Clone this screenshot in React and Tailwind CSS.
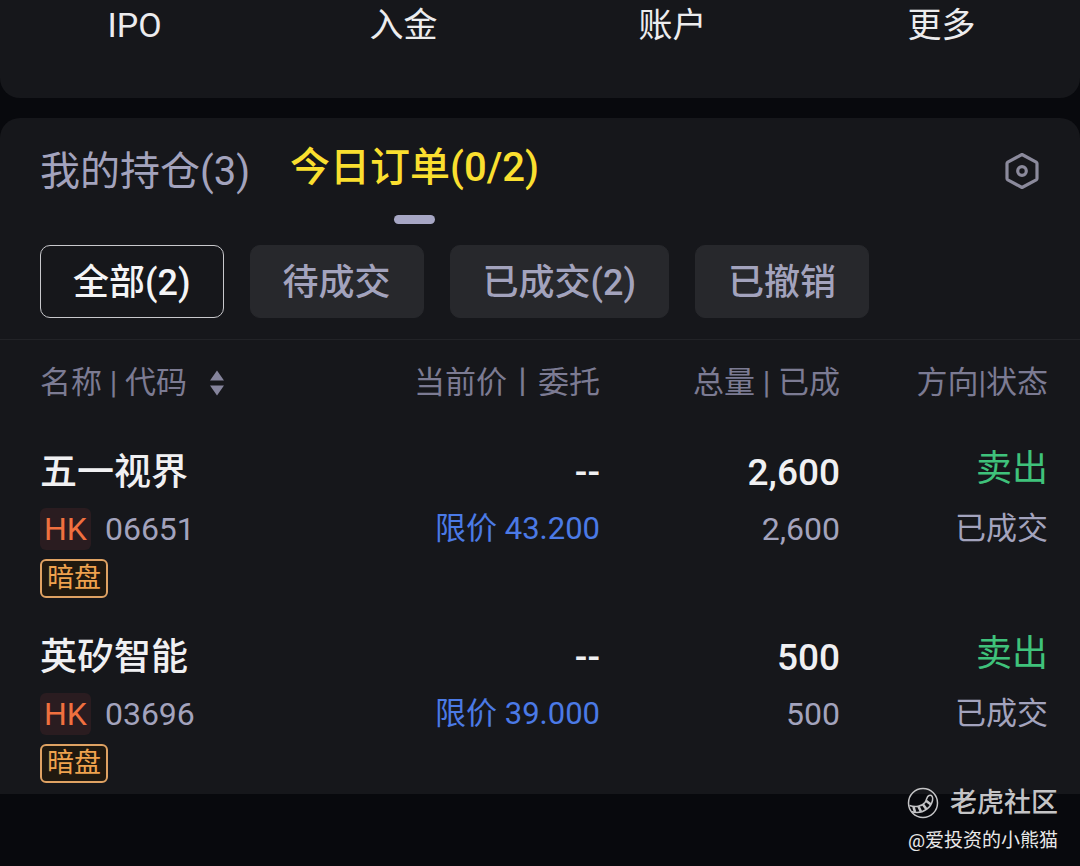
import React from 'react';

const actions = ['IPO', '入金', '账户', '更多'];

const filters = [
  { label: '全部(2)', active: true },
  { label: '待成交' },
  { label: '已成交(2)' },
  { label: '已撤销' },
];

const orders = [
  { name: '五一视界', market: 'HK', code: '06651', price: '--', limit: '限价 43.200', total: '2,600', filled: '2,600' },
  { name: '英矽智能', market: 'HK', code: '03696', price: '--', limit: '限价 39.000', total: '500', filled: '500' },
];

const SettingsIcon = () => (
  <svg width="36" height="38" viewBox="0 0 36 38" fill="none" stroke="#8b8a9c" strokeLinejoin="round" aria-hidden="true">
    <path d="M18 2.5 L32.2 10.2 Q33 10.7 33 11.6 V26.4 Q33 27.3 32.2 27.8 L18 35.5 L3.8 27.8 Q3 27.3 3 26.4 V11.6 Q3 10.7 3.8 10.2 Z" strokeWidth="3.2" />
    <circle cx="18" cy="19" r="4.3" strokeWidth="3.2" />
  </svg>
);

const SortIcon = () => (
  <svg width="16" height="26" viewBox="0 0 16 26" fill="#85849c" aria-hidden="true">
    <path d="M8 0.5 L15 10.5 H1 Z" />
    <path d="M8 25.5 L15 15.5 H1 Z" />
  </svg>
);

const TigerTail = () => (
  <svg width="32" height="32" viewBox="0 0 32 32" fill="none" stroke="#c4c4c6" aria-hidden="true">
    <circle cx="16" cy="16" r="14.5" strokeWidth="1.5" />
    <path d="M2.5 18.5 C8 20.5 15 19.5 18 15.5 C20 12.5 19.5 9.5 22 8.5 C25 7.5 26.2 10 25.5 13.5 C24 20.5 17 25.5 10 25.5 C7.5 25.5 5.5 25 4.5 24.5" strokeWidth="1.5" />
    <path d="M6.5 19.8 L8 25 M11.5 19.5 L14 24.8 M16 17.5 L19.5 22.3 M19 13.8 L24 17.5" strokeWidth="2.6" />
  </svg>
);

const Orders = () => (
  <table className="w-full table-fixed border-t border-[#222327] text-[31px] text-[#a3a3bd]">
    <thead>
      <tr className="h-[84px] text-right text-[#7c7b93]">
        <th scope="col" className="w-3/9 pt-0.5 pl-10 text-left font-normal">
          <button type="button" className="flex items-center gap-[22px] whitespace-nowrap">
            名称 | 代码 <SortIcon />
          </button>
        </th>
        <th scope="col" className="w-2/9 pt-0.5 font-normal whitespace-nowrap">当前价丨委托</th>
        <th scope="col" className="w-2/9 pt-0.5 font-normal whitespace-nowrap">总量 | 已成</th>
        <th scope="col" className="w-2/9 pt-0.5 pr-8 font-normal whitespace-nowrap">方向|状态</th>
      </tr>
    </thead>
    <tbody>
      {orders.map((order) => (
        <tr key={order.code} className="text-right align-top leading-[56px]">
          <td className="pt-[21px] pb-[11px] pl-10 text-left">
            <p className="text-[37px] leading-[56px] font-medium text-[#f0f0f2]">{order.name}</p>
            <p className="flex h-14 items-center gap-3.5 text-[32px]">
              <span className="rounded-md bg-[#2a1c20] px-1 leading-[42px] text-[#f0703f]">{order.market}</span>
              <span>{order.code}</span>
            </p>
            <span className="mt-0.5 flex h-[39px] w-[68px] items-center justify-center rounded-md border-2 border-[#dfa263] bg-[#20190f] text-[27px] text-[#efa24e]">
              暗盘
            </span>
          </td>
          <td className="pt-[21px]">
            <p className="text-[37px] leading-[56px] font-medium text-[#f0f0f2]">{order.price}</p>
            <p className="whitespace-nowrap text-[#4b7ae6]">{order.limit}</p>
          </td>
          <td className="pt-[21px]">
            <p className="text-[37px] leading-[56px] font-medium text-[#f0f0f2]">{order.total}</p>
            <p className="text-[32px]">{order.filled}</p>
          </td>
          <td className="pt-[21px] pr-8">
            <p className="pb-2 text-4xl leading-[48px] text-[#3fc27b]">卖出</p>
            <p>已成交</p>
          </td>
        </tr>
      ))}
    </tbody>
  </table>
);

const App = () => {
  return (
    <div className="relative min-h-screen bg-[#08090d] font-[Roboto,'Noto_Sans_CJK_SC',sans-serif]">
      {/* Quick actions */}
      <nav className="grid grid-cols-4 rounded-b-[20px] bg-[#16171b] pr-1 pb-12">
        {actions.map((label) => (
          <a key={label} href="#" className="text-center text-[34px] leading-[50px] text-[#ececee]">
            {label}
          </a>
        ))}
      </nav>

      <main className="mt-5 rounded-t-[20px] bg-[#16171b]">
        {/* Tabs */}
        <div className="flex h-[127px] items-start px-10">
          <button type="button" className="mt-6 text-[40px] leading-[60px] text-[#a3a3bd]">
            我的持仓(3)
          </button>
          <button type="button" className="mt-5 ml-10 flex flex-col items-center gap-[17px] text-[40px] leading-[60px] font-medium text-[#fadf2f]">
            今日订单(0/2)
            <span className="h-[9px] w-[41px] rounded-full bg-[#a6a6c4]" />
          </button>
          <button type="button" aria-label="设置" className="mt-[34px] ml-auto">
            <SettingsIcon />
          </button>
        </div>

        {/* Status filters */}
        <div className="flex gap-[26px] px-10 pb-[21px]">
          {filters.map((filter) => (
            <button
              key={filter.label}
              type="button"
              className={
                filter.active
                  ? 'h-[73px] rounded-[10px] border border-[#c8c8cc] px-8 pt-0.5 text-4xl font-medium whitespace-nowrap text-[#f4f4f6]'
                  : 'h-[73px] rounded-[10px] border border-[#27282c] bg-[#27282c] px-8 pt-0.5 text-4xl font-medium whitespace-nowrap text-[#a3a3bd]'
              }
            >
              {filter.label}
            </button>
          ))}
        </div>

        <Orders />
      </main>

      {/* Community watermark */}
      <footer className="absolute right-[22px] bottom-[7px] flex flex-col items-end">
        <p className="flex items-center gap-[11px] text-[27px] leading-10 font-medium text-[#c4c4c6]">
          <TigerTail />
          老虎社区
        </p>
        <p className="text-[19px] leading-9 text-[#e8e8e8]">@爱投资的小熊猫</p>
      </footer>
    </div>
  );
};

export default App;
